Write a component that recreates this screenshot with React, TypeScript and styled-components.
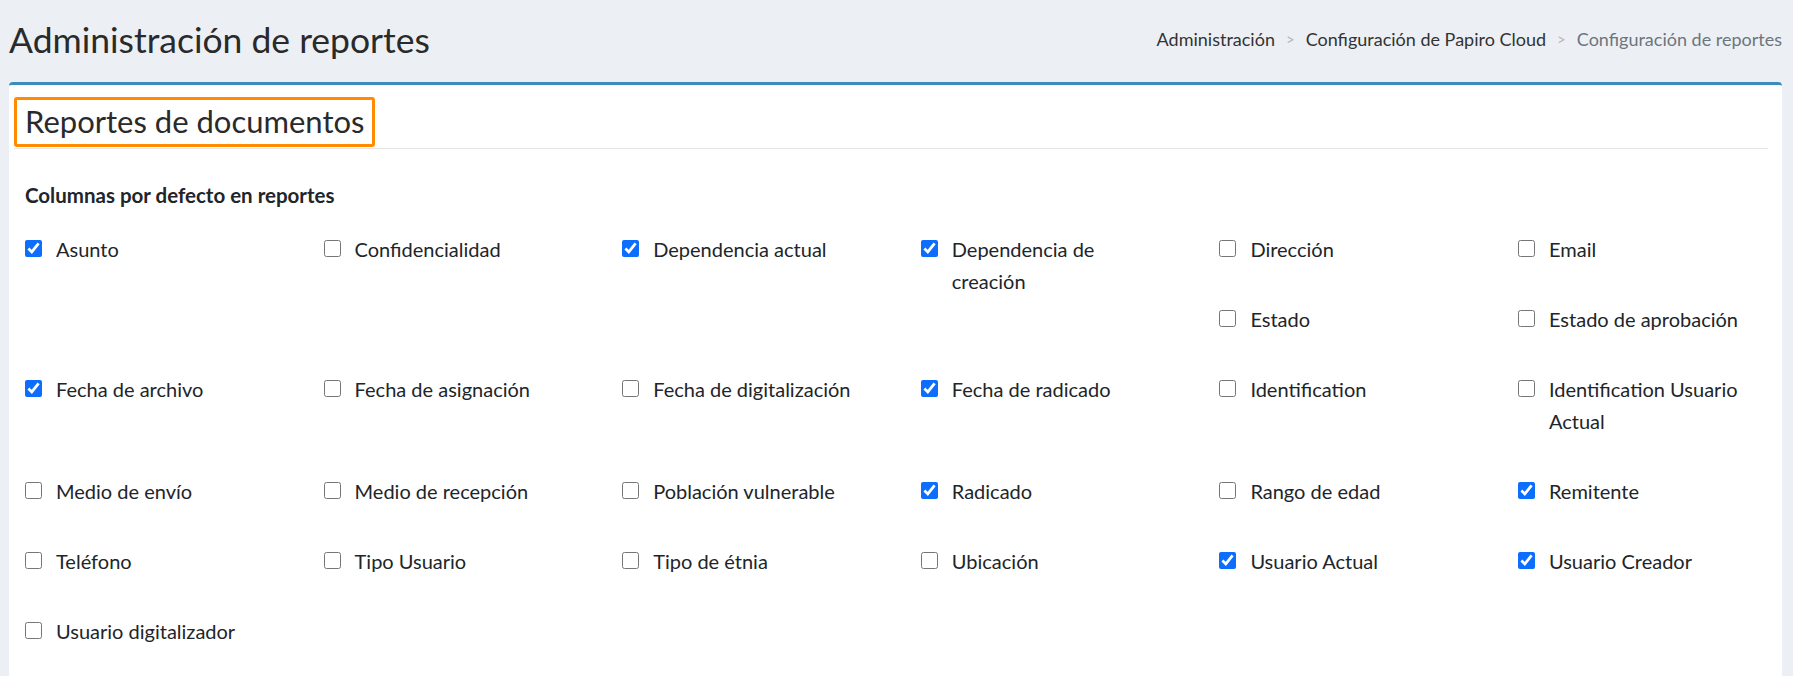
import React from "react";
import styled, { createGlobalStyle } from "styled-components";

const Global = createGlobalStyle`
  html, body { margin: 0; padding: 0; background: #ecf0f5; height: 676px; overflow: hidden; }
  body { font-family: Lato, "Open Sans", sans-serif; color: #212529; }
`;

const Page = styled.div`
  padding: 0 11px 0 9px;
`;
const Header = styled.div`
  display: flex; align-items: center; justify-content: space-between;
  height: 82px;
`;
const Title = styled.h1`
  margin: 0; font-weight: 400; font-size: 35.5px; color: #2a2a2a; padding-bottom: 4px;
`;
const Crumbs = styled.div`
  display: flex; align-items: center; gap: 11px; font-size: 18px; padding-bottom: 4px;
`;
const Crumb = styled.span<{ $active?: boolean }>`
  color: ${p => (p.$active ? "#6c757d" : "#333")};
`;
const Sep = styled.span` color: #b5b5b5; font-size: 15px; `;
const Card = styled.div`
  background: #fff; border-top: 3px solid #3c8dbc; border-radius: 4px 4px 0 0;
  height: 600px; overflow: hidden;
`;
const CardHead = styled.div`
  margin: 0 14px 0 5px; padding-top: 12px; border-bottom: 1px solid #e5e5e5;
`;
const HeadBox = styled.div`
  display: inline-block; border: 3px solid #ff8c00; border-radius: 3px;
  padding: 2px 8px 4px 8px; font-size: 31px; color: #2a2a2a; margin-bottom: 1px;
`;
const Body = styled.div` padding: 34px 16px 0 16px; `;
const SubTitle = styled.div` font-weight: 700; font-size: 20.5px; margin-bottom: 26px; `;
const Grid = styled.div` width: 1800px; &::after { content: ""; display: block; clear: both; } `;
const Item = styled.label`
  float: left; width: 298.6px; display: flex; align-items: flex-start; gap: 14px;
  font-size: 20px; line-height: 32px; padding-bottom: 38px; box-sizing: border-box;
`;
const Text = styled.span` white-space: pre-line; `;
const Box = styled.input`
  width: 17px; height: 17px; margin: 7px 0 0 0; flex: none; accent-color: #0d6efd;
`;

const items: [string, boolean][] = [
  ["Asunto", true], ["Confidencialidad", false], ["Dependencia actual", true], ["Dependencia de\ncreación", true], ["Dirección", false], ["Email", false],
  ["Estado", false], ["Estado de aprobación", false],
  ["Fecha de archivo", true], ["Fecha de asignación", false], ["Fecha de digitalización", false], ["Fecha de radicado", true], ["Identification", false], ["Identification Usuario\nActual", false],
  ["Medio de envío", false], ["Medio de recepción", false], ["Población vulnerable", false], ["Radicado", true], ["Rango de edad", false], ["Remitente", true],
  ["Teléfono", false], ["Tipo Usuario", false], ["Tipo de étnia", false], ["Ubicación", false], ["Usuario Actual", true], ["Usuario Creador", true],
  ["Usuario digitalizador", false],
];

export default function App() {
  return (
    <Page>
      <Global />
      <Header>
        <Title>Administración de reportes</Title>
        <Crumbs>
          <Crumb>Administración</Crumb><Sep>&gt;</Sep>
          <Crumb>Configuración de Papiro Cloud</Crumb><Sep>&gt;</Sep>
          <Crumb $active>Configuración de reportes</Crumb>
        </Crumbs>
      </Header>
      <Card>
        <CardHead><HeadBox>Reportes de documentos</HeadBox></CardHead>
        <Body>
          <SubTitle>Columnas por defecto en reportes</SubTitle>
          <Grid>
            {items.map(([t, c]) => (
              <Item key={t}><Box type="checkbox" defaultChecked={c} /><Text>{t}</Text></Item>
            ))}
          </Grid>
        </Body>
      </Card>
    </Page>
  );
}
